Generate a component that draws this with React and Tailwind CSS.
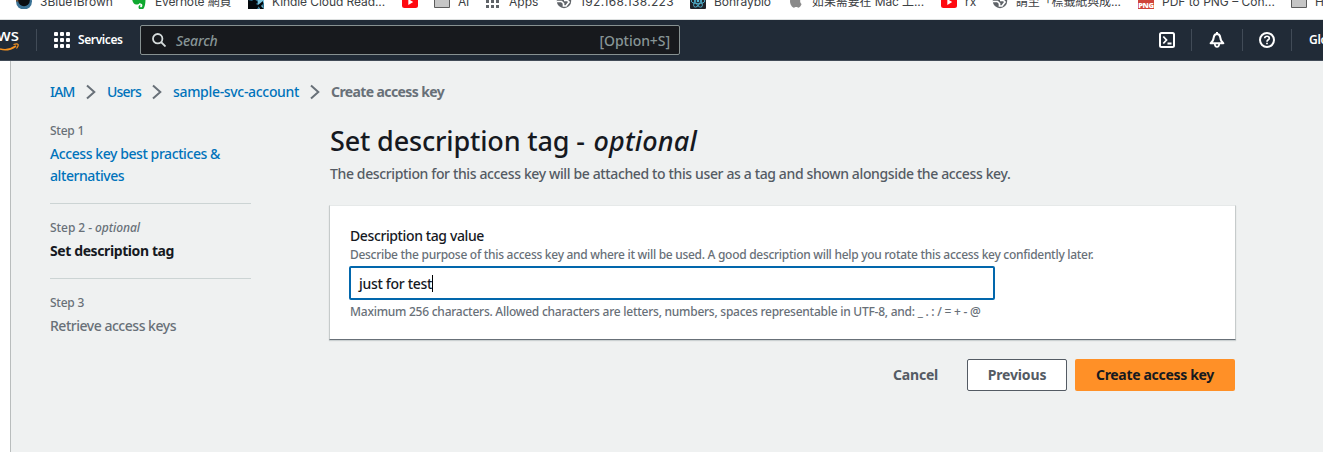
const Globe = () => (
  <svg viewBox="0 0 16 16" className="h-4 w-4"><circle cx="8" cy="8" r="7.200" fill="#5f6368" /><path d="M1 8.500h4.500l2 2v2.500h2.500l3-4-1.500-1.500H8" stroke="#fff" strokeWidth="1.700" fill="none" /></svg>
);
const Folder = () => (
  <svg viewBox="0 0 16 16" className="h-4 w-4"><path d="M.5 1.500h5l1.500 2h8.500v11H.5z" fill="#c6c6c6" stroke="#5c5c5c" /></svg>
);
const YouTube = () => (
  <svg viewBox="0 0 16 16" className="h-4 w-4"><rect y="3" width="16" height="12" rx="2.500" fill="#ff0910" /><path d="M6.300 6l4.900 3-4.900 3z" fill="#fff" /></svg>
);
const Brown = () => (
  <svg viewBox="0 0 16 16" className="h-4 w-4"><circle cx="8" cy="8.500" r="8" fill="#3c7396" /><path d="M8 0A8 8 0 0 0 0 8.500h8z" fill="#7a5130" /><circle cx="8" cy="7.500" r="5.800" fill="#0a0d12" /></svg>
);
const Evernote = () => (
  <svg viewBox="0 0 16 16" className="h-4 w-4"><path d="M1 4.500L5 1h4c3 0 5.500 1 5.500 5 0 4-.5 10.700-4 10.700-2 0-3-1-3-2.500 0-1.500 1-2.400 2.200-2.400-.8 1-.8 2.500.3 2.500 1 0 1.500-1 1.300-2.500-.3-1-2-1.500-3-1.500-.5 1-1.500 1.300-3 1.300C2.500 11.600 1 8 1 4.500z" fill="#0fa82f" /></svg>
);
const Kindle = () => (
  <svg viewBox="0 0 16 16" className="h-4 w-4"><rect width="16" height="16" fill="#2c6f8e" /><path d="M9 0h7v9l-2 3 2 4h-5l-1-5z" fill="#7cc4dd" /><path d="M0 16V7l4 1 2-2 4 3-2 2 3 2-2 3zM10 12l5-4v3l-2 2 3 3h-4z" fill="#04080c" /></svg>
);
const Grid = () => (
  <svg viewBox="0 0 16 16" className="h-4 w-4" fill="#5f6368">{[1, 6, 11].map((x) => [2, 7, 12].map((y) => <rect key={`${x}-${y}`} x={x} y={y} width="3" height="3" />))}</svg>
);
const ReactIcon = () => (
  <svg viewBox="0 0 16 16" className="h-4 w-4"><rect width="16" height="16" rx="1" fill="#20232a" /><g fill="none" stroke="#53b8d6" strokeWidth=".9"><ellipse cx="8" cy="8" rx="6.800" ry="2.700" /><ellipse cx="8" cy="8" rx="6.800" ry="2.700" transform="rotate(60 8 8)" /><ellipse cx="8" cy="8" rx="6.800" ry="2.700" transform="rotate(120 8 8)" /></g><circle cx="8" cy="8" r="1.300" fill="#53b8d6" /></svg>
);
const Apple = () => (
  <svg viewBox="0 0 16 16" className="h-4 w-4"><path d="M11 0c.1 1.500-1.200 3-2.700 3C8.100 1.500 9.500.2 11 0zM13.600 11c-.6 1.600-1.900 3.700-3.100 3.700-.9 0-1.200-.6-2.300-.6s-1.400.6-2.300.6C4.200 14.700 2 11.400 2 8.300 2 5.200 4 3.700 5.700 3.700c1.100 0 1.800.7 2.600.7.800 0 1.500-.8 2.900-.8.800 0 1.900.4 2.500 1.400-2.200 1.300-1.900 4.900-.1 6z" fill="#8a8a8a" /></svg>
);
const Png = () => (
  <span className="flex h-4 w-4 shrink-0 flex-col items-center justify-end bg-[#d0443a] font-['Open_Sans',sans-serif] text-[7.500px] font-extrabold leading-[8px] tracking-[-0.3px] text-white"><span>PDF</span><span>PNG</span></span>
);

const bookmarks = [
  { icon: Brown, text: "3Blue1Brown", w: "w-[115px]", t: "" },
  { icon: Evernote, text: "Evernote 網頁", w: "w-[117px]", t: "tracking-[-0.13px]" },
  { icon: Kindle, text: "Kindle Cloud Read...", w: "w-[154px]", t: "tracking-[-0.08px]" },
  { icon: YouTube, text: "", w: "w-[32px]", t: "" },
  { icon: Folder, text: "AI", w: "w-[51px]", t: "tracking-[-0.2px]" },
  { icon: Grid, text: "Apps", w: "w-[71px]", t: "" },
  { icon: Globe, text: "192.168.138.223", w: "w-[134px]", t: "tracking-[0.34px]" },
  { icon: ReactIcon, text: "Bonraybio", w: "w-[98px]", t: "tracking-[-0.05px]" },
  { icon: Apple, text: "如果需要在 Mac 上...", w: "w-[153px]", t: "tracking-[-0.11px]" },
  { icon: YouTube, text: "rx", w: "w-[51px]", t: "" },
  { icon: Globe, text: "請至「標籤紙與成...", w: "w-[146px]", t: "tracking-[-0.13px]" },
  { icon: Png, text: "PDF to PNG – Con...", w: "w-[153px]", t: "" },
  { icon: Folder, text: "H", w: "w-[60px]", t: "" },
];

const Chevron = () => (
  <svg viewBox="0 0 10 16" className="h-4 w-[10px] shrink-0" fill="none" stroke="#687078" strokeWidth="2"><path d="M1 1.500L8.300 8 1 14.500" /></svg>
);
const Divider = () => <span className="h-[22px] w-px shrink-0 bg-[#414b57]" />;

export default function App() {
  return (
    <div className="h-[452px] w-[1323px] overflow-hidden bg-white font-['Noto_Sans','Noto_Sans_CJK_TC',sans-serif] text-[14px] font-medium text-[#16191f]">
      <div className="flex h-5 overflow-hidden border-b border-[#dcdfdf] pl-4 font-['Inter','Noto_Sans_CJK_TC',sans-serif] text-[12px] font-normal text-[#3c4043]">
        {bookmarks.map(({ icon: Icon, text, w, t }, i) => (
          <div key={i} className={`-mt-[7px] flex h-4 shrink-0 items-center gap-2 whitespace-nowrap ${w}`}>
            <Icon />
            <span className={`pt-[2px] ${t}`}>{text}</span>
          </div>
        ))}
      </div>

      <header className="flex h-[41px] items-center overflow-hidden border-b border-[#414b57] bg-[#212b37] text-white">
        <div className="flex h-full w-9 shrink-0 flex-col overflow-hidden pt-[5px]">
          <span className="-ml-[3px] text-[17px] leading-[20px]">ws</span>
          <svg viewBox="0 0 20 8" className="-mt-[2px] h-2 w-5" fill="none" stroke="#f79320" strokeWidth="1.600"><path d="M0 6C5 7.500 11 6.500 16 3" /><path d="M13.500 1.500c2-.7 4-.8 4.500-.2s-.2 2.500-1.500 4.200" strokeWidth="1.200" /></svg>
        </div>
        <Divider />
        <div className="ml-[17px] grid shrink-0 grid-cols-3 gap-[2px]">
          {Array.from({ length: 9 }, (_, i) => <span key={i} className="h-1 w-1 rounded-[1px] bg-white" />)}
        </div>
        <span className="ml-2 w-[62px] shrink-0 text-[12px] font-semibold tracking-[-0.4px]">Services</span>
        <div className="flex h-[30px] w-[540px] shrink-0 items-center rounded-[2px] border border-[#879191] bg-[#17191d] pl-[11px] pr-[9px] text-[#879596]">
          <svg viewBox="0 0 14 14" className="mr-[10px] h-[14px] w-[14px]" fill="none" stroke="#d5dbdb" strokeWidth="1.800"><circle cx="5.700" cy="5.700" r="4.700" /><path d="M9 9l4.500 4.500" /></svg>
          <span className="italic tracking-[-0.17px]">Search</span>
          <span className="ml-auto tracking-[-0.06px]">[Option+S]</span>
        </div>
        <div className="ml-[479px] flex shrink-0 items-center">
          <svg viewBox="0 0 16 16" className="mr-4 h-4 w-4" fill="none" stroke="#fff" strokeWidth="2"><rect x="1" y="1" width="14" height="14" rx="1.500" /><path d="M4.300 4.500L7.500 8l-3.200 3.500M8.500 11.500h4" strokeWidth="1.800" /></svg>
          <Divider />
          <svg viewBox="0 0 16 16" className="ml-[17px] mr-[17px] h-4 w-4" fill="none" stroke="#fff" strokeWidth="2"><path d="M8 0v2M1.600 11.200C4 9.500 4.500 8 4.700 5.500 5 3.300 6.300 2 8 2s3 1.300 3.300 3.500c.2 2.500.7 4 3.100 5.700z" strokeLinejoin="round" /><path d="M5.800 12c.2 3.700 4.200 3.700 4.400 0" strokeWidth="1.800" /></svg>
          <Divider />
          <svg viewBox="0 0 16 16" className="ml-4 mr-4 h-4 w-4" fill="none" stroke="#fff" strokeWidth="2"><circle cx="8" cy="8" r="7" /><path d="M5.700 6.300C5.700 3.500 10.300 3.600 10.300 6.200 10.300 7.800 8 7.800 8 9.700M8 10.700v1.600" strokeWidth="1.700" /></svg>
          <Divider />
          <span className="ml-[17px] text-[12px] font-semibold tracking-[-0.3px]">Global</span>
        </div>
      </header>

      <main className="ml-[10px] h-[391px] border-l border-[#b9bdbd] bg-[#eff1f1] pl-[39px]">
        <nav className="flex h-[61px] items-center whitespace-nowrap text-[#0073bb]">
          <span className="w-[36px] tracking-[-0.83px]">IAM</span>
          <Chevron />
          <span className="ml-[11px] w-[45px] tracking-[-0.78px]">Users</span>
          <Chevron />
          <span className="ml-[11px] w-[137px] tracking-[-0.32px]">sample-svc-account</span>
          <Chevron />
          <span className="ml-[11px] font-bold tracking-[-0.61px] text-[#687078]">Create access key</span>
        </nav>

        <div className="flex">
          <aside className="mt-px w-[201px] shrink-0 leading-[22px] text-[#687078]">
            <div className="h-[84px] border-b border-[#ccd4d4]">
              <p className="-mt-[3px] text-[12px] tracking-[-0.25px]">Step 1</p>
              <p className="mt-[1px] text-[#0073bb] tracking-[-0.42px]">Access key best practices &amp;<br />alternatives</p>
            </div>
            <div className="h-[75px] border-b border-[#ccd4d4] pt-[13px]">
              <p className="text-[12px] tracking-[-0.06px]">Step 2 - <em>optional</em></p>
              <p className="mt-[1px] font-bold tracking-[-0.4px] text-[#16191f]">Set description tag</p>
            </div>
            <div className="pt-[13px]">
              <p className="text-[12px] tracking-[-0.25px]">Step 3</p>
              <p className="mt-[1px] tracking-[-0.48px]">Retrieve access keys</p>
            </div>
          </aside>

          <section className="ml-[78px] w-[907px]">
            <h1 className="h-[41px] whitespace-nowrap pl-px text-[27px] font-medium leading-[38px] tracking-[-0.16px]"><span>Set description tag</span><span className="mr-[2px]"> - </span><em className="tracking-[0.16px]">optional</em></h1>
            <p className="h-[42px] whitespace-nowrap pl-px leading-[22px] tracking-[-0.37px] text-[#545b64]">The description for this access key will be attached to this user as a tag and shown alongside the access key.</p>
            <div className="h-[135px] border border-b-[#687078] border-l-[#c6cbcb] border-r-[#c6cbcb] border-t-[#e6e9e9] bg-white pl-[19px] pt-[19px] shadow-[0_1px_1px_rgba(0,28,36,0.150)]">
              <p className="pl-px leading-[22px] tracking-[-0.39px]">Description tag value</p>
              <p className="whitespace-nowrap pl-px text-[12px] leading-4 tracking-[-0.29px] text-[#687078]">Describe the purpose of this access key and where it will be used. A good description will help you rotate this access key confidently later.</p>
              <div className="mt-[3px] flex h-[34px] w-[646px] items-center rounded-[2px] border-2 border-[#0267ac] pl-2">
                <span className="tracking-[-0.31px]">just for test</span>
                <span className="h-[17px] w-px bg-black" />
              </div>
              <p className="mt-[4px] whitespace-nowrap pl-px text-[12px] leading-4 tracking-[-0.25px] text-[#687078]">Maximum 256 characters. Allowed characters are letters, numbers, spaces representable in UTF-8, and: _ . : / = + - @</p>
            </div>
            <div className="mt-[19px] flex justify-end pr-px font-bold text-[#545b64]">
              <button className="mr-[29px] pb-px tracking-[-0.21px]">Cancel</button>
              <button className="mr-2 h-8 w-[100px] rounded-[2px] border border-[#545b64] bg-white pb-px tracking-[-0.16px]">Previous</button>
              <button className="h-8 w-[160px] rounded-[2px] bg-[#ff9027] pb-px tracking-[-0.32px] text-[#16191f]">Create access key</button>
            </div>
          </section>
        </div>
      </main>
    </div>
  );
}
